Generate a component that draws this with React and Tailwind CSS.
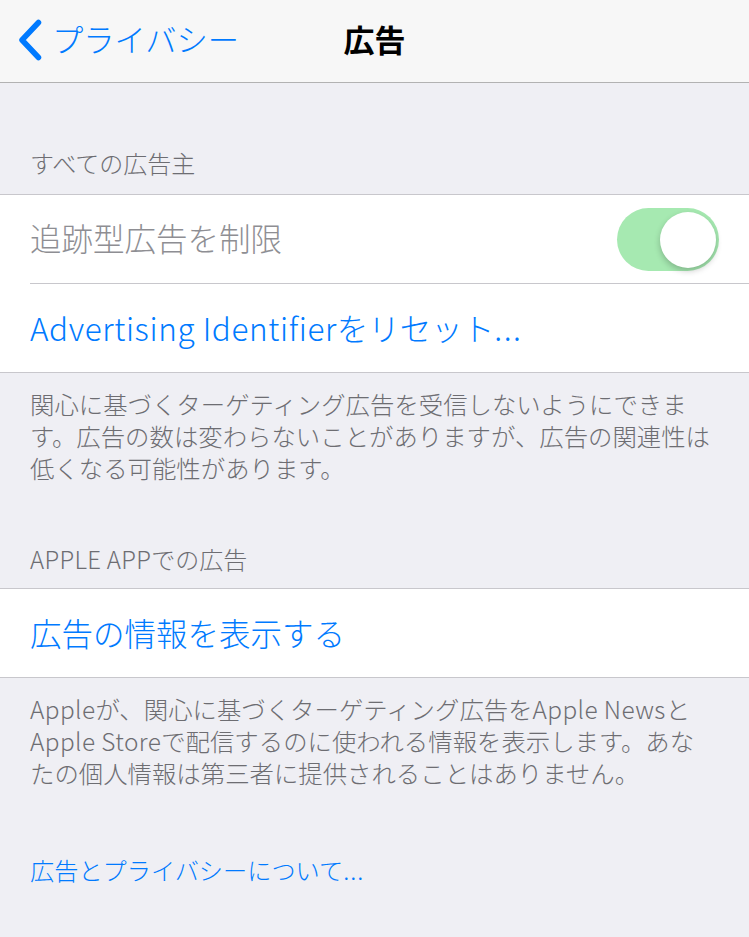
export default function App() {
  const font = { fontFamily: '"Noto Sans CJK JP", "Noto Sans", sans-serif' };
  const L = ({ children, t = "tracking-[0.6px]" }) => <span className={"inline-block " + t}>{children}</span>;
  return (
    <div className="w-[749px] h-[937px] bg-[#efeff4] overflow-hidden font-light" style={font}>
      {/* Nav bar */}
      <div className="relative h-[83px] bg-[#f7f7f7] border-b border-[#b2b2b2] flex items-center pb-[5px]">
        <div className="flex items-center pl-[17px]">
          <svg width="26" height="42" viewBox="0 0 26 42" className="mr-[9px] mt-[3px]">
            <path d="M21.5 3.5 L5 21 L21.5 38.5" fill="none" stroke="#007aff" strokeWidth="5.5" strokeLinecap="round" strokeLinejoin="round" />
          </svg>
          <span className="text-[31.3px] leading-none text-[#007aff]">プライバシー</span>
        </div>
        <div className="absolute left-0 right-0 top-0 bottom-[5px] flex items-center justify-center pointer-events-none">
          <span className="text-[31px] leading-none font-bold text-black">広告</span>
        </div>
      </div>

      {/* Section 1 header */}
      <div className="pt-[64px] pb-[15px] px-[30px] text-[24px] leading-[32px] text-[#6d6d72]">すべての広告主</div>

      <div className="bg-white border-t border-b border-[#c8c7cc]">
        <div className="h-[88px] flex items-center justify-between pl-[30px] pr-[30px]">
          <span className="text-[31.5px] text-[#8e8e93] -mt-[3px]">追跡型広告を制限</span>
          <div className="relative w-[102px] h-[63px] rounded-full bg-[#a6e9b1]">
            <div className="absolute right-[3px] top-[4px] w-[56px] h-[56px] rounded-full bg-white shadow-[0_3px_6px_rgba(0,0,0,0.22)]" />
          </div>
        </div>
        <div className="ml-[30px] h-px bg-[#c8c7cc]" />
        <div className="h-[88px] flex items-center px-[30px]">
          <span className="text-[31.5px] leading-[40px] text-[#007aff] -mt-[2px] whitespace-nowrap">
            <L>Advertising Identifier</L>をリセット<L t="tracking-[1.5px]">...</L>
          </span>
        </div>
      </div>

      <div className="pt-[15px] px-[30px] text-[24.4px] leading-[32px] text-[#6d6d72] whitespace-nowrap">
        <div>関心に基づくターゲティング広告を受信しないようにできま</div>
        <div>す。広告の数は変わらないことがありますが、広告の関連性は</div>
        <div>低くなる可能性があります。</div>
      </div>

      {/* Section 2 header */}
      <div className="pt-[59px] pb-[13px] px-[30px] text-[24px] leading-[32px] text-[#6d6d72]">
        <L t="tracking-[0.3px]">APPLE APP</L>での広告
      </div>

      <div className="bg-white border-t border-b border-[#c8c7cc]">
        <div className="h-[88px] flex items-center px-[30px]">
          <span className="text-[31.5px] text-[#007aff] -mt-[1px]">広告の情報を表示する</span>
        </div>
      </div>

      <div className="pt-[15px] px-[30px] text-[24.4px] leading-[32px] text-[#6d6d72] whitespace-nowrap">
        <div><L t="tracking-[0.4px]">Apple</L>が、関心に基づくターゲティング広告を<L t="tracking-[0.4px]">Apple News</L>と</div>
        <div><L t="tracking-[0.4px]">Apple Store</L>で配信するのに使われる情報を表示します。あな</div>
        <div>たの個人情報は第三者に提供されることはありません。</div>
      </div>

      <div className="pt-[65px] px-[30px] text-[24.2px] leading-[32px] text-[#007aff]">
        広告とプライバシーについて<L t="tracking-[1px]">...</L>
      </div>
    </div>
  );
}
